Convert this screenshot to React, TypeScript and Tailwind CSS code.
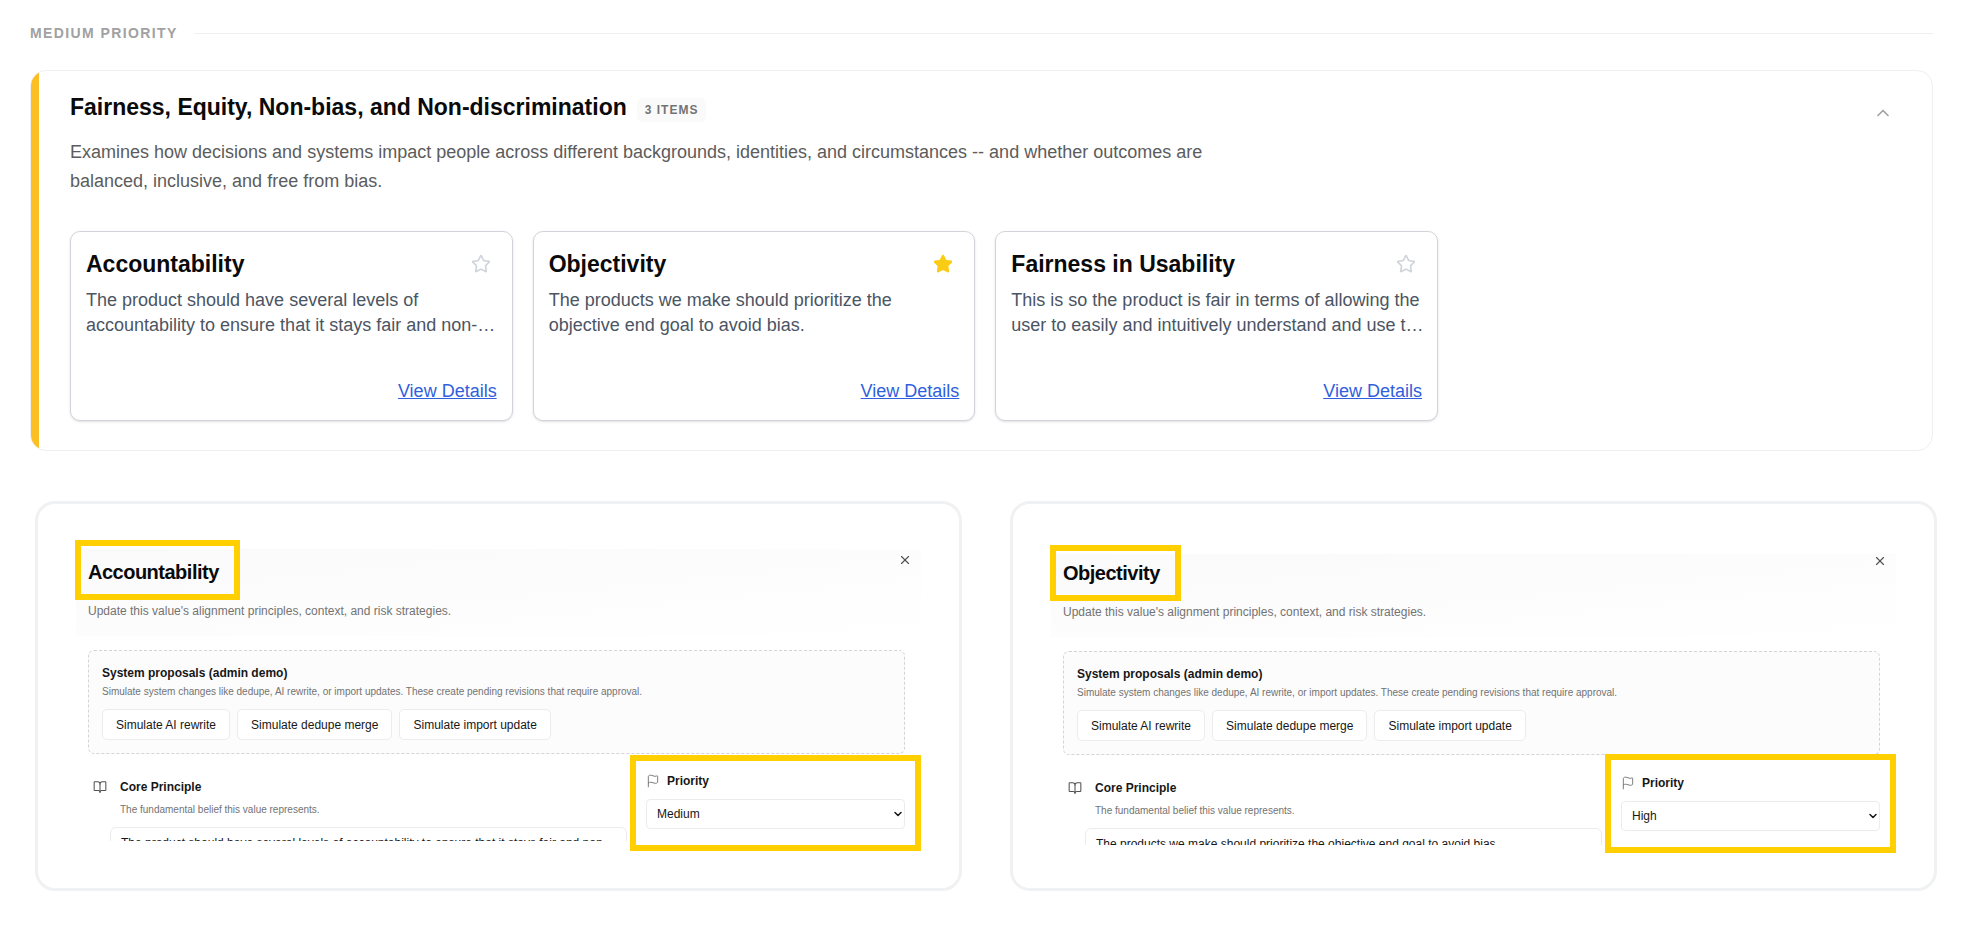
import { useState } from "react";
import { BookOpen, ChevronDown, ChevronUp, Flag, Star, X } from "lucide-react";

type ValueItem = { title: string; text: string; starred: boolean };

const items: ValueItem[] = [
  {
    title: "Accountability",
    text: "The product should have several levels of accountability to ensure that it stays fair and non-…",
    starred: false,
  },
  {
    title: "Objectivity",
    text: "The products we make should prioritize the objective end goal to avoid bias.",
    starred: true,
  },
  {
    title: "Fairness in Usability",
    text: "This is so the product is fair in terms of allowing the user to easily and intuitively understand and use t…",
    starred: false,
  },
];

function ValueCard({ item }: { item: ValueItem }) {
  const [starred, setStarred] = useState(item.starred);
  return (
    <article className="flex flex-col rounded-[10px] border border-[#d1d5db] bg-white px-[15px] pt-[18px] pb-[15px] shadow-sm">
      <div className="flex h-7 items-center justify-between">
        <h3 className="text-[23px] leading-7 font-bold text-neutral-950">{item.title}</h3>
        <button
          type="button"
          aria-label={"Star " + item.title}
          aria-pressed={starred}
          onClick={() => setStarred(!starred)}
          className="mr-[6px]"
        >
          <Star
            size={20}
            className={starred ? "fill-[#facc15] text-[#facc15]" : "text-[#d1d5db]"}
          />
        </button>
      </div>
      <p className="mt-[10px] -mr-2 mb-10 min-h-[50px] text-lg leading-[25px] text-[#4b5563]">{item.text}</p>
      <a href="#details" className="self-end text-lg leading-[27px] text-[#2f5fdd] underline">
        View Details
      </a>
    </article>
  );
}

type EditorProps = {
  id: string;
  title: string;
  principle: string;
  priority: string;
  panelPad: string;
  headerSize: string;
  titlePad: string;
  markTop: string;
  closeGap: string;
  rowGap: string;
  principleBox: string;
  priorityPad: string;
};

const editors: EditorProps[] = [
  {
    id: "accountability",
    title: "Accountability",
    principle: "The product should have several levels of accountability to ensure that it stays fair and non-",
    priority: "Medium",
    panelPad: "pt-[45px]",
    headerSize: "h-[87px]",
    titlePad: "pt-[9px]",
    markTop: "-top-[18px]",
    closeGap: "mt-1",
    rowGap: "mt-px",
    principleBox: "h-[86px] pt-6",
    priorityPad: "pt-3",
  },
  {
    id: "objectivity",
    title: "Objectivity",
    principle: "The products we make should prioritize the objective end goal to avoid bias.",
    priority: "High",
    panelPad: "pt-[50px]",
    headerSize: "h-[83px]",
    titlePad: "pt-[5px]",
    markTop: "-top-[14px]",
    closeGap: "mt-0",
    rowGap: "-mt-px",
    principleBox: "h-[91px] pt-[26px]",
    priorityPad: "pt-[15px]",
  },
];

const simulations = ["Simulate AI rewrite", "Simulate dedupe merge", "Simulate import update"];

function EditorPanel(props: EditorProps) {
  return (
    <section className={"rounded-[20px] border-[3px] border-[#f0f1f2] px-[38px] pb-[35px] " + props.panelPad}>
      <header
        className={
          "flex items-start justify-between bg-linear-to-br from-neutral-50 to-white pr-[9px] pl-3 " + props.headerSize
        }
      >
        <div className={props.titlePad}>
          <h2 className="relative w-fit text-xl leading-7 font-bold tracking-tight text-neutral-950">
            {props.title}
            <span
              aria-hidden="true"
              className={"absolute -right-[21px] -bottom-[14px] -left-[13px] border-[6px] border-[#ffcf00] " + props.markTop}
            />
          </h2>
          <p className="mt-[17px] text-xs leading-4 text-neutral-500">
            Update this value's alignment principles, context, and risk strategies.
          </p>
        </div>
        <button type="button" aria-label="Close" className={"text-neutral-600 " + props.closeGap}>
          <X size={14} />
        </button>
      </header>

      <div className="mt-[14px] mr-4 ml-3 rounded-md border border-dashed border-neutral-300 bg-[#fcfcfc] px-[13px] pt-[14px] pb-[13px]">
        <h3 className="text-xs leading-4 font-bold text-neutral-900">System proposals (admin demo)</h3>
        <p className="mt-1 text-[10px] leading-[14px] text-neutral-500">
          Simulate system changes like dedupe, AI rewrite, or import updates. These create pending revisions that require
          approval.
        </p>
        <div className="mt-[10px] flex gap-[7px]">
          {simulations.map((label) => (
            <button
              key={label}
              type="button"
              className="h-[31px] rounded-[5px] border border-[#ececec] bg-white px-[13px] text-xs text-neutral-900"
            >
              {label}
            </button>
          ))}
        </div>
      </div>

      <div className={"flex items-start " + props.rowGap}>
        <div className={"min-w-0 flex-1 overflow-hidden pr-[3px] " + props.principleBox}>
          <div className="flex items-center gap-[13px] pl-[17px]">
            <BookOpen size={14} strokeWidth={1.8} className="text-neutral-600" />
            <label htmlFor={props.id + "-principle"} className="text-xs leading-4 font-bold text-neutral-900">
              Core Principle
            </label>
          </div>
          <p className="mt-2 pl-11 text-[10px] leading-[14px] text-neutral-500">
            The fundamental belief this value represents.
          </p>
          <div className="mt-[10px] pl-[34px]">
            <textarea
              id={props.id + "-principle"}
              defaultValue={props.principle}
              className="block h-[60px] w-full resize-none overflow-hidden rounded-md border border-[#ececec] px-[10px] pt-[6px] text-xs leading-[18px] text-neutral-900"
            />
          </div>
        </div>
        <div className={"w-[291px] shrink-0 border-[6px] border-[#ffcf00] px-[10px] pb-4 " + props.priorityPad}>
          <div className="flex items-center gap-[7px]">
            <Flag size={14} strokeWidth={1.6} className="text-neutral-500" />
            <label htmlFor={props.id + "-priority"} className="text-xs leading-4 font-bold text-neutral-900">
              Priority
            </label>
          </div>
          <div className="relative mt-[10px]">
            <select
              id={props.id + "-priority"}
              defaultValue={props.priority}
              className="block h-[30px] w-full appearance-none rounded border border-[#ececec] bg-white px-[10px] text-xs text-neutral-900"
            >
              <option>High</option>
              <option>Medium</option>
              <option>Low</option>
            </select>
            <ChevronDown
              size={12}
              strokeWidth={3}
              className="pointer-events-none absolute top-[9px] right-px text-neutral-900"
            />
          </div>
        </div>
      </div>
    </section>
  );
}

export default function App() {
  return (
    <main className="bg-white pt-[23px] pr-[50px] pb-12 pl-[30px] font-['Liberation_Sans',Arial,sans-serif]">
      <div className="flex items-center gap-4">
        <h2 className="text-sm leading-5 font-bold tracking-widest text-neutral-400 uppercase">Medium Priority</h2>
        <div className="h-px flex-1 bg-[#f0f0f0]" />
      </div>

      <section className="mt-[27px] flex overflow-hidden rounded-2xl border border-[#f0f0f0]">
        <div className="w-2 shrink-0 bg-[#fbbf24]" />
        <div className="min-w-0 flex-1 pt-[22px] pr-[39px] pb-[29px] pl-[31px]">
          <div className="flex items-start justify-between">
            <div>
              <div className="flex h-7 items-center gap-[10px]">
                <h2 className="text-[23px] leading-7 font-bold text-neutral-950">
                  Fairness, Equity, Non-bias, and Non-discrimination
                </h2>
                <span className="mt-[6px] rounded-md bg-neutral-50 px-2 text-xs leading-6 font-bold tracking-[1px] text-neutral-500 uppercase">
                  3 items
                </span>
              </div>
              <p className="mt-[17px] max-w-6xl text-lg leading-[29px] text-[#5c5c5c]">
                Examines how decisions and systems impact people across different backgrounds, identities, and
                circumstances -- and whether outcomes are balanced, inclusive, and free from bias.
              </p>
            </div>
            <button type="button" aria-label="Collapse" className="mt-[10px] text-neutral-400">
              <ChevronUp size={20} />
            </button>
          </div>
          <div className="mt-[35px] grid max-w-[1368px] grid-cols-3 gap-5">
            {items.map((item) => (
              <ValueCard key={item.title} item={item} />
            ))}
          </div>
        </div>
      </section>

      <div className="mt-[50px] -mr-1 ml-[5px] grid grid-cols-2 gap-12">
        {editors.map((editor) => (
          <EditorPanel key={editor.id} {...editor} />
        ))}
      </div>
    </main>
  );
}
